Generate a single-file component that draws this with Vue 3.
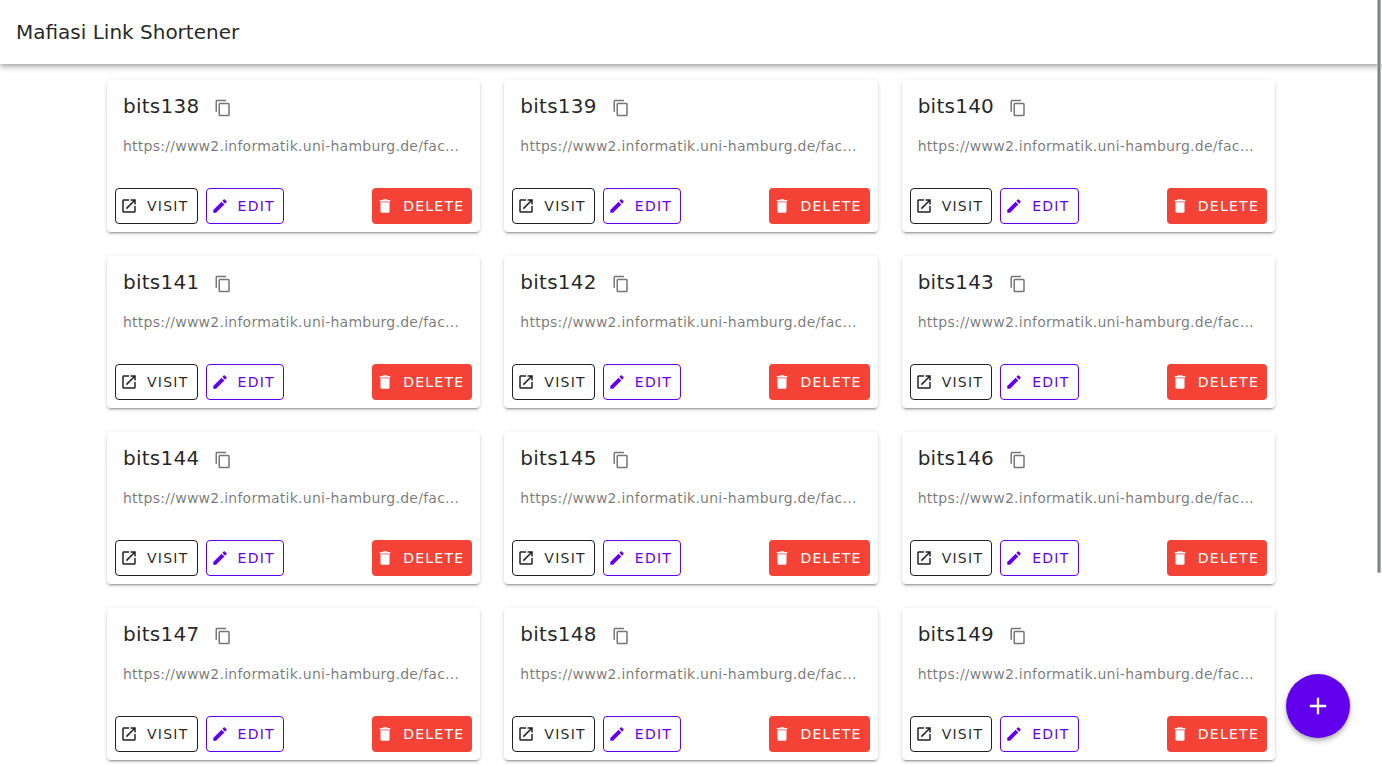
<script setup>
const url = 'https://www2.informatik.uni-hamburg.de/fachschaft/'
const links = Array.from({ length: 12 }, (_, i) => ({ name: `bits${138 + i}`, url }))
</script>

<template>
  <div class="app">
    <header class="bar">
      <h1 class="bar-title">Mafiasi Link Shortener</h1>
    </header>
    <main class="grid">
      <article v-for="link in links" :key="link.name" class="card">
        <div class="heading">
          <h2 class="name">{{ link.name }}</h2>
          <button class="copy" type="button" :aria-label="`Copy ${link.name}`">
            <svg class="icon" viewBox="0 0 24 24"><path d="M19,21H8V7H19M19,5H8A2,2 0 0,0 6,7V21A2,2 0 0,0 8,23H19A2,2 0 0,0 21,21V7A2,2 0 0,0 19,5M16,1H4A2,2 0 0,0 2,3V17H4V3H16V1Z" /></svg>
          </button>
        </div>
        <p class="url">{{ link.url }}</p>
        <div class="actions">
          <a class="btn visit" :href="link.url">
            <svg class="icon" viewBox="0 0 24 24"><path d="M14,3V5H17.59L7.76,14.83L9.17,16.24L19,6.41V10H21V3M19,19H5V5H12V3H5C3.89,3 3,3.9 3,5V19A2,2 0 0,0 5,21H19A2,2 0 0,0 21,19V12H19V19Z" /></svg>
            <span>VISIT</span>
          </a>
          <button class="btn edit" type="button">
            <svg class="icon" viewBox="0 0 24 24"><path d="M20.71,7.04C21.1,6.65 21.1,6 20.71,5.63L18.37,3.29C18,2.9 17.35,2.9 16.96,3.29L15.12,5.12L18.87,8.87M3,17.25V21H6.75L17.81,9.93L14.06,6.18L3,17.25Z" /></svg>
            <span>EDIT</span>
          </button>
          <button class="btn delete" type="button">
            <svg class="icon" viewBox="0 0 24 24"><path d="M19,4H15.5L14.5,3H9.5L8.5,4H5V6H19M6,19A2,2 0 0,0 8,21H16A2,2 0 0,0 18,19V7H6V19Z" /></svg>
            <span>DELETE</span>
          </button>
        </div>
      </article>
    </main>
    <button class="fab" type="button" aria-label="Add link">
      <svg class="fab-icon" viewBox="0 0 24 24"><path d="M19,13H13V19H11V13H5V11H11V5H13V11H19V13Z" /></svg>
    </button>
    <div class="scroll-thumb" aria-hidden="true"></div>
  </div>
</template>

<style>
html {
  scrollbar-width: none;
}
body {
  background: #fff;
}
</style>

<style scoped>
.app {
  font-family: "DejaVu Sans", sans-serif;
  color: rgba(0, 0, 0, 0.87);
}
.app * {
  box-sizing: border-box;
}
.bar {
  position: sticky;
  top: 0;
  z-index: 1;
  display: flex;
  align-items: center;
  height: 64px;
  padding: 0 16px;
  background: #fff;
  box-shadow: 0 2px 4px -1px rgba(0, 0, 0, 0.2), 0 4px 5px 0 rgba(0, 0, 0, 0.14), 0 1px 10px 0 rgba(0, 0, 0, 0.12);
}
.bar-title {
  margin: 0;
  font-size: 20px;
  font-weight: 400;
  line-height: 30px;
}
.grid {
  display: grid;
  grid-template-columns: repeat(3, minmax(0, 1fr));
  gap: 24px;
  max-width: 1200px;
  margin: 0 auto;
  padding: 16px;
}
.card {
  border-radius: 4px;
  background: #fff;
  box-shadow: 0 3px 1px -2px rgba(0, 0, 0, 0.2), 0 2px 2px 0 rgba(0, 0, 0, 0.14), 0 1px 5px 0 rgba(0, 0, 0, 0.12);
}
.heading {
  display: flex;
  align-items: center;
  gap: 15px;
  height: 56px;
  padding: 0 16px 4px;
}
.name {
  margin: 0;
  font-size: 20px;
  font-weight: 400;
  line-height: 32px;
  letter-spacing: 0.0125em;
}
.copy {
  display: flex;
  margin: 0;
  padding: 4px 0 0;
  border: 0;
  background: none;
  color: rgba(0, 0, 0, 0.54);
  cursor: pointer;
}
.icon {
  display: block;
  flex: none;
  width: 18px;
  height: 18px;
  fill: currentColor;
}
.url {
  margin: 0;
  padding: 0 16px;
  overflow: hidden;
  font-size: 14px;
  line-height: 20px;
  letter-spacing: 0.0178em;
  text-overflow: ellipsis;
  white-space: nowrap;
  color: rgba(0, 0, 0, 0.54);
}
.actions {
  display: flex;
  gap: 8px;
  padding: 32px 8px 8px;
}
.btn {
  display: flex;
  align-items: center;
  gap: 9px;
  height: 36px;
  padding: 0 8px 0 4px;
  border: 1px solid currentColor;
  border-radius: 4px;
  background: none;
  font-family: inherit;
  font-size: 14px;
  line-height: 20px;
  letter-spacing: 0.0893em;
  text-decoration: none;
  cursor: pointer;
}
.visit {
  color: rgba(0, 0, 0, 0.87);
}
.edit {
  color: #6200ee;
}
.delete {
  margin-left: auto;
  border: 0;
  background: #f44336;
  color: #fff;
}
.fab {
  position: fixed;
  right: 32px;
  bottom: 28px;
  z-index: 2;
  display: flex;
  align-items: center;
  justify-content: center;
  width: 64px;
  height: 64px;
  padding: 0;
  border: 0;
  border-radius: 50%;
  background: #6200ee;
  color: #fff;
  box-shadow: 0 2px 4px -1px rgba(0, 0, 0, 0.2), 0 4px 5px 0 rgba(0, 0, 0, 0.14), 0 1px 10px 0 rgba(0, 0, 0, 0.12);
  cursor: pointer;
}
.fab-icon {
  width: 28px;
  height: 28px;
  fill: currentColor;
}
.scroll-thumb {
  position: fixed;
  top: 0;
  right: 1px;
  z-index: 3;
  width: 4px;
  height: 573px;
  border: 1px solid #b9bbba;
  border-top: 0;
  background: #7c8280;
}
</style>
